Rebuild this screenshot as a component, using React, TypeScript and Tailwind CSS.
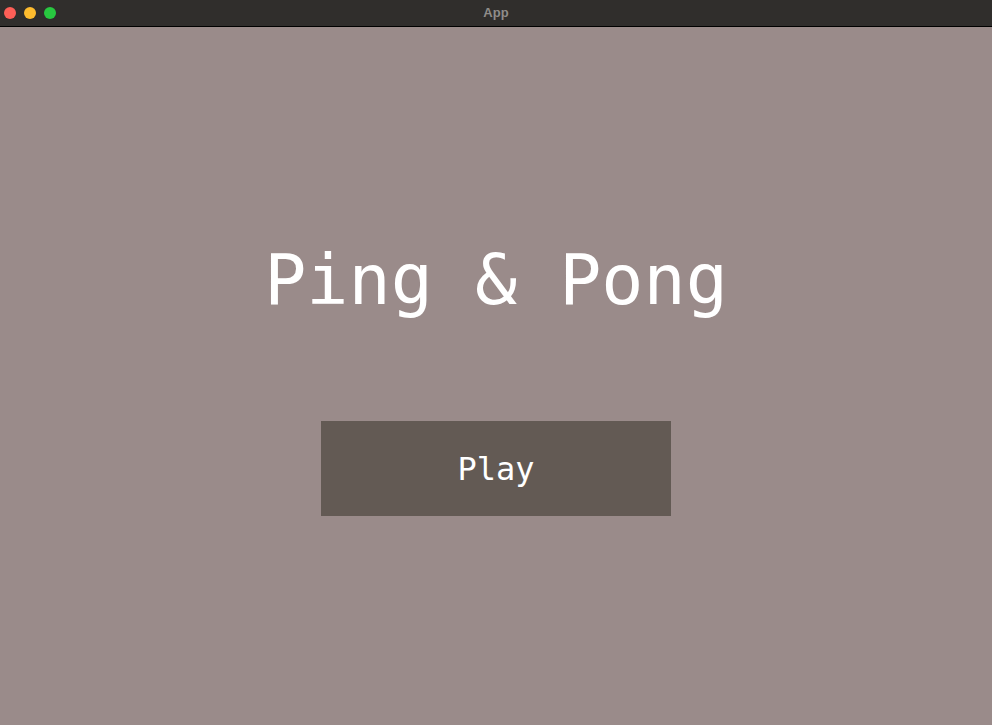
import React from 'react';

const mono = { fontFamily: '"DejaVu Sans Mono", "Liberation Mono", monospace' };

function TitleBar() {
  return (
    <div className="relative flex h-[27px] items-center border-b border-black bg-[#302e2c]">
      <div className="flex items-center gap-[8px] pl-[4px]">
        <span className="h-[12px] w-[12px] rounded-full bg-[#fe5f57]" />
        <span className="h-[12px] w-[12px] rounded-full bg-[#febc2e]" />
        <span className="h-[12px] w-[12px] rounded-full bg-[#28c840]" />
      </div>
      <div className="absolute inset-0 flex items-center justify-center text-[13px] font-bold text-[#8f8c89]" style={{ fontFamily: '"Liberation Sans", Arial, sans-serif' }}>
        App
      </div>
    </div>
  );
}

export default function App() {
  return (
    <div className="flex h-[725px] w-[992px] flex-col overflow-hidden bg-[#9a8b8a]">
      <TitleBar />
      <div className="flex flex-1 flex-col items-center pt-[218px]" style={mono}>
        <h1 className="text-[70px] leading-none text-white">Ping &amp; Pong</h1>
        <button className="mt-[106px] flex h-[95px] w-[350px] items-center justify-center bg-[#635a54] text-[32px] text-white">
          Play
        </button>
      </div>
    </div>
  );
}
